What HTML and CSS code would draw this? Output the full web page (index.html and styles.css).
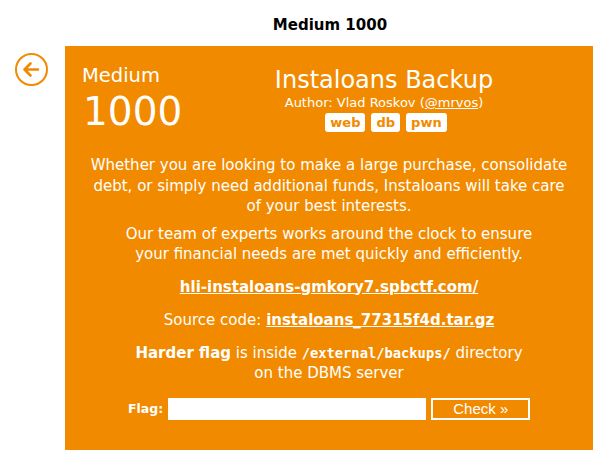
FILE: index.html
```html
<!DOCTYPE html>
<html>
<head>
<meta charset="utf-8">
<link rel="stylesheet" href="styles.css">
</head>
<body>
<div class="page">
  <h1 class="page-title">Medium 1000</h1>
  <div class="wrap">
    <a class="back" href="#">
      <svg width="33" height="33" viewBox="0 0 33 33">
        <circle cx="16.5" cy="16.5" r="15.5" fill="none" stroke="#f28a00" stroke-width="2"/>
        <path d="M23 16.5H10M15.5 10.5L9.5 16.5L15.5 22.5" fill="none" stroke="#f28a00" stroke-width="2.6" stroke-linecap="round" stroke-linejoin="round"/>
      </svg>
    </a>
    <div class="card">
      <div class="head">
        <div class="score">
          <div class="cat">Medium</div>
          <div class="pts">1000</div>
        </div>
        <div class="info">
          <div class="name">Instaloans Backup</div>
          <div class="author">Author: Vlad Roskov (<a href="#">@mrvos</a>)</div>
          <div class="tags"><span class="tag">web</span><span class="tag">db</span><span class="tag">pwn</span></div>
        </div>
      </div>
      <div class="desc">
        <p class="intro">Whether you are looking to make a large purchase, consolidate<br>debt, or simply need additional funds, Instaloans will take care<br>of your best interests.</p>
        <p>Our team of experts works around the clock to ensure<br>your financial needs are met quickly and efficiently.</p>
        <p><a class="strong-link" href="#">hli-instaloans-gmkory7.spbctf.com/</a></p>
        <p>Source code: <a class="strong-link" href="#">instaloans_77315f4d.tar.gz</a></p>
        <p class="last"><b>Harder flag</b> is inside <code>/external/backups/</code> directory<br>on the DBMS server</p>
      </div>
      <form class="flag-form">
        <label class="flag-label">Flag:</label>
        <input class="flag-input" type="text">
        <button class="flag-btn" type="button">Check »</button>
      </form>
    </div>
  </div>
</div>
</body>
</html>
```

FILE: styles.css
```css
html, body {
  margin: 0;
  padding: 0;
  background: #fff;
}
body {
  font-family: "DejaVu Sans", Verdana, sans-serif;
}
.page {
  width: 615px;
}
.page-title {
  margin: 0;
  width: 595px;
  padding-left: 65px;
  box-sizing: border-box;
  text-align: center;
  font-size: 15px;
  font-weight: bold;
  color: #000;
  padding-top: 16px;
  height: 46px;
  line-height: 18px;
}
.wrap {
  display: flex;
  align-items: flex-start;
}
.back {
  display: block;
  width: 33px;
  height: 33px;
  margin: 7px 17px 0 15px;
}
.back svg { display: block; }
.card {
  width: 528px;
  height: 404px;
  background: #f28a00;
  color: #fff;
  box-sizing: border-box;
}
.head {
  display: flex;
  height: 109px;
}
.score {
  width: 110px;
  flex: none;
  padding-left: 17px;
  box-sizing: border-box;
}
.cat {
  font-size: 19.5px;
  line-height: 22px;
  margin-top: 19px;
}
.pts {
  font-size: 39px;
  line-height: 40px;
  margin-top: 5px;
  margin-left: 1px;
}
.info {
  flex: 1;
  text-align: center;
  padding-top: 20px;
}
.name {
  font-size: 24px;
  line-height: 28px;
}
.author {
  font-size: 13px;
  line-height: 15px;
  margin-top: 1px;
}
.author a { color: #fff; }
.tags {
  display: flex;
  justify-content: center;
  gap: 6px;
  margin-top: 3px;
  padding-left: 4px;
}
.tag {
  background: #fff;
  color: #f28a00;
  font-weight: bold;
  font-size: 13px;
  line-height: 19px;
  padding: 0 5px;
  border-radius: 3px;
}
.desc {
  text-align: center;
  font-size: 15px;
  line-height: 20px;
}
.desc p { margin: 0 0 13px; }
.desc p.intro { line-height: 20.5px; margin-bottom: 7px; }
.desc p.last { margin-bottom: 0; }
.strong-link {
  color: #fff;
  font-weight: bold;
}
code {
  font-family: "DejaVu Sans Mono", monospace;
  font-weight: bold;
  font-size: 13.75px;
}
.flag-form {
  display: flex;
  align-items: center;
  margin-top: 15px;
  padding-left: 63px;
}
.flag-label {
  font-weight: bold;
  font-size: 12.5px;
  margin-right: 5px;
}
.flag-input {
  width: 258px;
  height: 22px;
  border: none;
  padding: 0;
  box-sizing: border-box;
  margin: 0;
}
.flag-btn {
  margin-left: 5px;
  width: 99px;
  height: 22px;
  border: 2px solid #fff;
  background: transparent;
  color: #fff;
  font-family: "Liberation Sans", Arial, sans-serif;
  font-size: 15px;
  line-height: 16px;
  padding: 0;
}
```
